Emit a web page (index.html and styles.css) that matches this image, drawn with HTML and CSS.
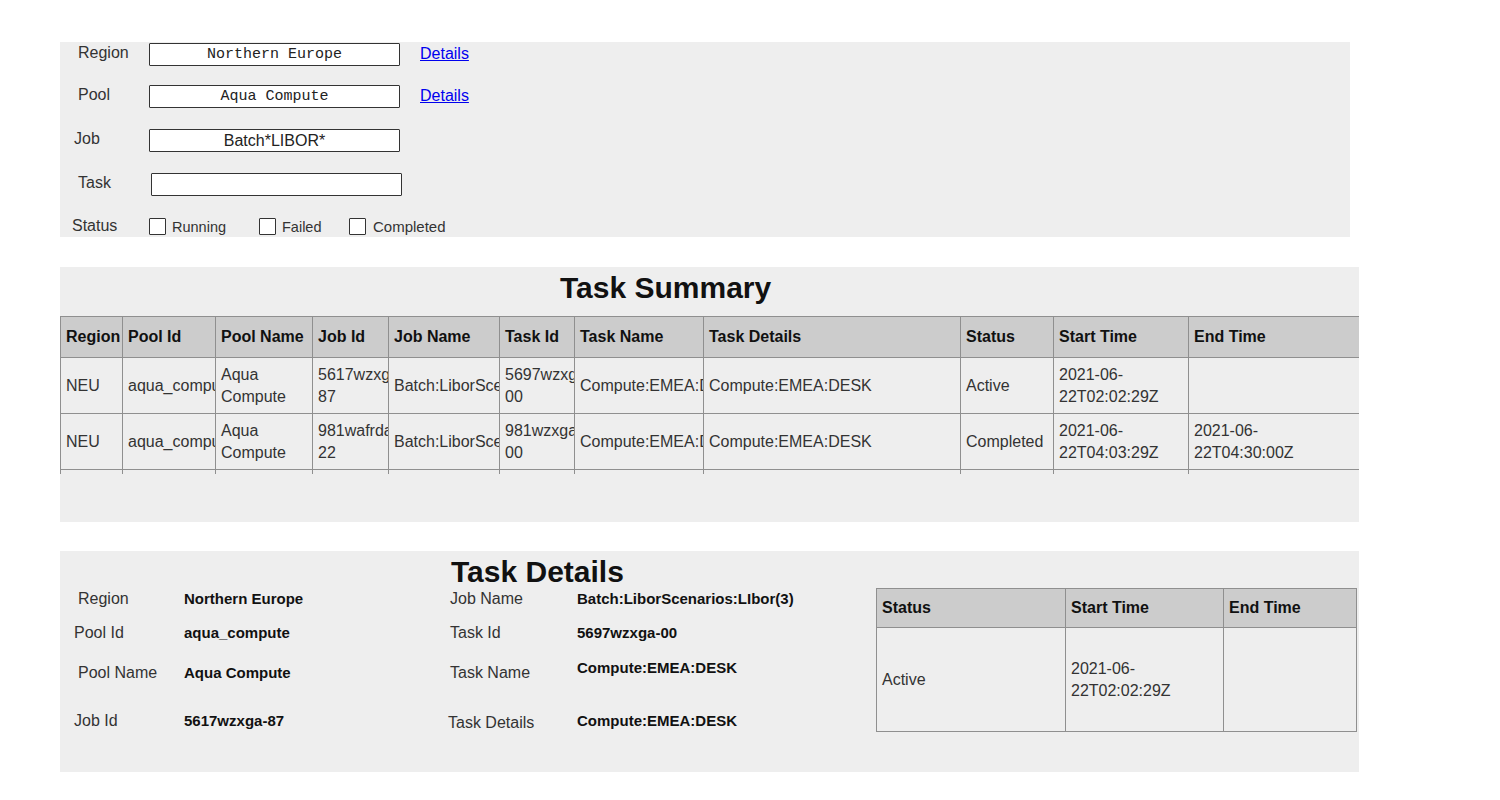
FILE: index.html
```html
<!DOCTYPE html>
<html>
<head>
  <title>Batch Task Explorer</title>
  <link rel="stylesheet" href="styles.css">
</head>
<body>
  <div class="page">

    <section class="panel filters">
      <div class="filter-grid">
        <span class="field-label">Region</span>
        <div class="sketch-input mono">Northern Europe</div>
        <a class="details-link" href="#">Details</a>

        <span class="field-label">Pool</span>
        <div class="sketch-input mono">Aqua Compute</div>
        <a class="details-link" href="#">Details</a>

        <span class="field-label field-label-tight">Job</span>
        <div class="sketch-input hand">Batch*LIBOR*</div>
        <span></span>

        <span class="field-label">Task</span>
        <div class="sketch-input sketch-input-offset"></div>
        <span></span>

        <span class="field-label field-label-status">Status</span>
        <div class="status-options">
          <label class="check-option"><span class="check-box"></span>Running</label>
          <label class="check-option"><span class="check-box"></span>Failed</label>
          <label class="check-option"><span class="check-box"></span>Completed</label>
        </div>
      </div>
    </section>

    <section class="panel summary">
      <h2 class="panel-title summary-title">Task Summary</h2>
      <div class="table-clip">
        <table class="grid-table summary-table">
          <colgroup>
            <col class="w-region">
            <col class="w-pool-id">
            <col class="w-pool-name">
            <col class="w-job-id">
            <col class="w-job-name">
            <col class="w-task-id">
            <col class="w-task-name">
            <col class="w-task-details">
            <col class="w-status">
            <col class="w-start">
            <col class="w-end">
          </colgroup>
          <thead>
            <tr>
              <th>Region</th>
              <th>Pool Id</th>
              <th>Pool Name</th>
              <th>Job Id</th>
              <th>Job Name</th>
              <th>Task Id</th>
              <th>Task Name</th>
              <th>Task Details</th>
              <th>Status</th>
              <th>Start Time</th>
              <th>End Time</th>
            </tr>
          </thead>
          <tbody>
            <tr>
              <td><div class="cell">NEU</div></td>
              <td><div class="cell">aqua_compute</div></td>
              <td><div class="cell">Aqua Compute</div></td>
              <td><div class="cell">5617wzxga-87</div></td>
              <td><div class="cell">Batch:LiborScenarios:LIbor(3)</div></td>
              <td><div class="cell">5697wzxga-00</div></td>
              <td><div class="cell">Compute:EMEA:DESK</div></td>
              <td><div class="cell">Compute:EMEA:DESK</div></td>
              <td><div class="cell">Active</div></td>
              <td><div class="cell">2021-06-22T02:02:29Z</div></td>
              <td></td>
            </tr>
            <tr>
              <td><div class="cell">NEU</div></td>
              <td><div class="cell">aqua_compute</div></td>
              <td><div class="cell">Aqua Compute</div></td>
              <td><div class="cell">981wafrdas-22</div></td>
              <td><div class="cell">Batch:LiborScenarios:LIbor(2)</div></td>
              <td><div class="cell">981wzxga-00</div></td>
              <td><div class="cell">Compute:EMEA:DESK</div></td>
              <td><div class="cell">Compute:EMEA:DESK</div></td>
              <td><div class="cell">Completed</div></td>
              <td><div class="cell">2021-06-22T04:03:29Z</div></td>
              <td><div class="cell">2021-06-22T04:30:00Z</div></td>
            </tr>
            <tr>
              <td></td><td></td><td></td><td></td><td></td><td></td>
              <td></td><td></td><td></td><td></td><td></td>
            </tr>
          </tbody>
        </table>
      </div>
    </section>

    <section class="panel details">
      <h2 class="panel-title details-title">Task Details</h2>

      <dl class="detail-list detail-list-primary">
        <dt>Region</dt>
        <dd>Northern Europe</dd>
        <dt class="dt-tight">Pool Id</dt>
        <dd>aqua_compute</dd>
        <dt>Pool Name</dt>
        <dd>Aqua Compute</dd>
        <dt class="dt-tight">Job Id</dt>
        <dd>5617wzxga-87</dd>
      </dl>

      <dl class="detail-list detail-list-secondary">
        <dt>Job Name</dt>
        <dd>Batch:LiborScenarios:LIbor(3)</dd>
        <dt>Task Id</dt>
        <dd>5697wzxga-00</dd>
        <dt>Task Name</dt>
        <dd class="dd-raised">Compute:EMEA:DESK</dd>
        <dt class="dt-tight">Task Details</dt>
        <dd>Compute:EMEA:DESK</dd>
      </dl>

      <table class="grid-table status-table">
        <colgroup>
          <col class="w-st-status">
          <col class="w-st-start">
          <col class="w-st-end">
        </colgroup>
        <thead>
          <tr>
            <th>Status</th>
            <th>Start Time</th>
            <th>End Time</th>
          </tr>
        </thead>
        <tbody>
          <tr>
            <td>Active</td>
            <td>2021-06-22T02:02:29Z</td>
            <td></td>
          </tr>
        </tbody>
      </table>
    </section>

  </div>
</body>
</html>
```

FILE: styles.css
```css
/* Base */
* {
  box-sizing: border-box;
}

body {
  margin: 0;
  background-color: #ffffff;
  color: #333333;
  font-family: "Liberation Sans", Arial, sans-serif;
  font-size: 16px;
}

.page {
  padding: 42px 0 0 60px;
  display: flex;
  flex-direction: column;
}

.panel {
  width: 1299px;
  background-color: #eeeeee;
}

.panel-title {
  margin: 0;
  font-size: 30px;
  font-weight: 700;
  color: #111111;
}

/* Filter panel */
.filters {
  width: 1290px;
}

.filter-grid {
  display: grid;
  grid-template-columns: 89px 271px auto;
  grid-template-rows: 42px 44px 44px 44px 21px;
}

.field-label {
  padding-left: 18px;
  line-height: 22px;
  color: #333333;
}

.field-label-tight {
  padding-left: 14px;
}

.field-label-status {
  padding-left: 12px;
  align-self: center;
  margin-top: -2px;
}

.sketch-input {
  width: 251px;
  height: 23px;
  margin-top: 1px;
  border: 1px solid #333333;
  border-radius: 1px;
  background-color: #ffffff;
  text-align: center;
  line-height: 21px;
  color: #222222;
}

.sketch-input-offset {
  margin-left: 2px;
}

.mono {
  font-family: "Liberation Mono", "Courier New", monospace;
  font-size: 15px;
}

.hand {
  font-family: "Comic Sans MS", "Liberation Sans", sans-serif;
  font-size: 16px;
}

.details-link {
  font-family: "Comic Sans MS", "Liberation Sans", sans-serif;
  font-size: 16px;
  line-height: 24px;
  color: #0000ee;
  text-decoration: underline;
}

.status-options {
  grid-column: 2 / 4;
  display: grid;
  grid-template-columns: 110px 90px auto;
  align-items: center;
}

.check-option {
  display: flex;
  align-items: center;
  gap: 6px;
  font-family: "Comic Sans MS", "Liberation Sans", sans-serif;
  font-size: 14.5px;
  color: #333333;
}

.check-option:last-child {
  font-size: 15px;
  gap: 7px;
}

.check-box {
  width: 17px;
  height: 17px;
  border: 1px solid #333333;
  border-radius: 1px;
  background-color: #ffffff;
}

/* Shared table */
.grid-table {
  border-collapse: collapse;
  table-layout: fixed;
  background-color: #eeeeee;
}

.grid-table th,
.grid-table td {
  border: 1px solid #8f8f8f;
  padding: 0 5px;
  text-align: left;
  vertical-align: middle;
  overflow: hidden;
  line-height: 22px;
}

.grid-table th {
  background-color: #cccccc;
  color: #111111;
  font-weight: 700;
  white-space: nowrap;
}

.grid-table td {
  color: #333333;
}

.summary-table td {
  padding: 0;
}

.cell {
  padding: 0 10px 0 5px;
  overflow: hidden;
}

/* Summary panel */
.summary {
  margin-top: 30px;
  height: 255px;
}

.summary-title {
  height: 49px;
  padding: 4px 0 0 500px;
  line-height: 34px;
}

.table-clip {
  height: 158px;
  overflow: hidden;
}

.summary-table {
  width: 1299px;
}

.summary-table thead tr {
  height: 41px;
}

.summary-table tbody tr {
  height: 56px;
}

.w-region { width: 62px; }
.w-pool-id { width: 93px; }
.w-pool-name { width: 97px; }
.w-job-id { width: 76px; }
.w-job-name { width: 111px; }
.w-task-id { width: 75px; }
.w-task-name { width: 129px; }
.w-task-details { width: 257px; }
.w-status { width: 93px; }
.w-start { width: 135px; }
.w-end { width: 171px; }

/* Details panel */
.details {
  margin-top: 29px;
  height: 221px;
  display: grid;
  grid-template-columns: 388px 428px 480px;
  grid-template-rows: 37px auto;
}

.details-title {
  grid-column: 2;
  grid-row: 1;
  padding: 3px 0 0 3px;
  line-height: 36px;
}

.detail-list {
  grid-row: 2;
  margin: 0;
  display: grid;
  grid-template-rows: 34px 40px 48px 22px;
  align-items: start;
}

.detail-list dt {
  line-height: 22px;
  color: #333333;
}

.detail-list dd {
  margin: 0;
  line-height: 22px;
  font-size: 15px;
  font-weight: 700;
  color: #111111;
}

.detail-list-primary {
  grid-column: 1;
  grid-template-columns: 124px 1fr;
}

.detail-list-primary dt {
  padding-left: 18px;
}

.detail-list-primary .dt-tight {
  padding-left: 14px;
}

.detail-list-secondary {
  grid-column: 2;
  grid-template-columns: 129px 1fr;
}

.detail-list-secondary dt {
  padding-left: 2px;
}

.detail-list-secondary .dt-tight {
  padding-left: 0;
  margin-top: 2px;
}

.detail-list-secondary .dd-raised {
  margin-top: -5px;
}

.status-table {
  grid-column: 3;
  grid-row: 2;
  align-self: start;
  width: 480px;
}

.status-table thead tr {
  height: 39px;
}

.status-table tbody tr {
  height: 104px;
}

.w-st-status { width: 189px; }
.w-st-start { width: 158px; }
.w-st-end { width: 133px; }
```
